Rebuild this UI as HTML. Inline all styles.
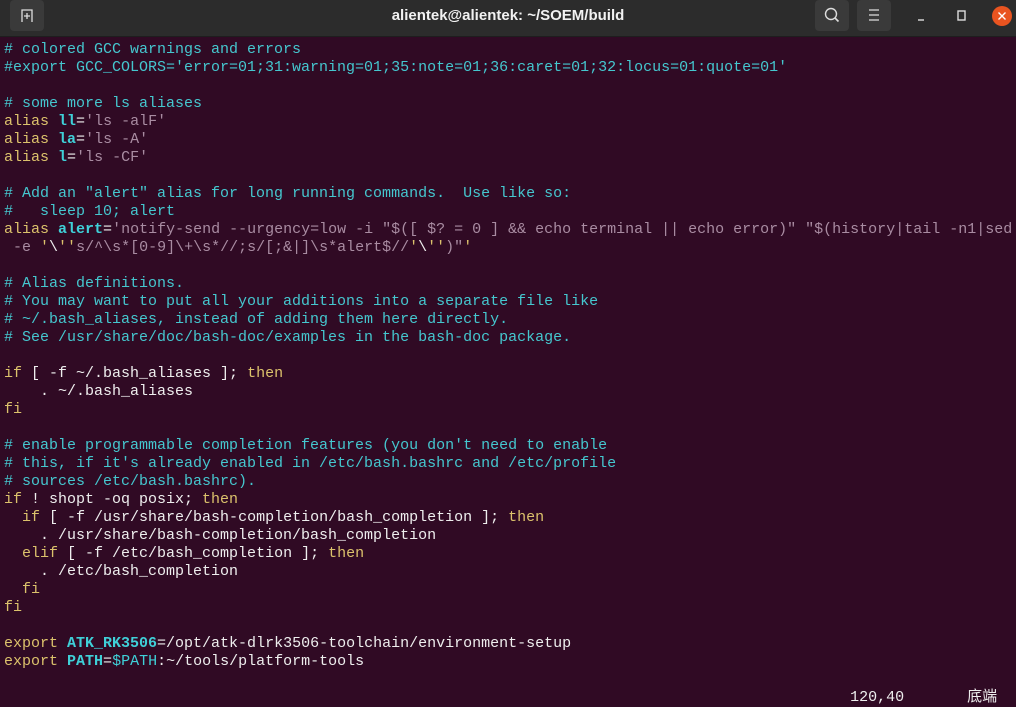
<!DOCTYPE html>
<html><head><meta charset="utf-8"><style>
*{margin:0;padding:0;box-sizing:border-box}
body{width:1016px;height:706px;overflow:hidden;background:#300a24;font-family:"Liberation Sans",sans-serif}
.tb{position:absolute;left:0;top:0;width:1016px;height:37px;background:#2c2c2c;border-bottom:1px solid #1e1e1e}
.title{position:absolute;left:0;right:0;top:0;line-height:32px;text-align:center;color:#f2f2f2;font-weight:bold;font-size:15px}
.btn{position:absolute;top:0;width:34px;height:31px;background:#3a3a3a;border-radius:4px}
.term{position:absolute;left:4px;top:41px;font-family:"Liberation Mono","Noto Sans CJK SC",monospace;font-size:15px;line-height:18px;color:#eeeeee;white-space:pre}
.c{color:#45c7cf}.y{color:#dcc26c}.s{color:#a98ca2}.b{color:#3fd0d8;font-weight:bold}.v{color:#3fd0d8}
</style></head><body>
<div class="tb">
<div class="btn" style="left:10px"><svg width="34" height="31" viewBox="0 0 34 31"><path d="M12 22V10h10v12M17 13v6M14 16h6" stroke="#ddd" stroke-width="1.3" fill="none"/></svg></div>
<div class="title">alientek@alientek: ~/SOEM/build</div>
<div class="btn" style="left:815px"><svg width="34" height="31" viewBox="0 0 34 31"><circle cx="16" cy="14" r="5.5" stroke="#ddd" stroke-width="1.4" fill="none"/><path d="M20 18l3.5 3.5" stroke="#ddd" stroke-width="1.6"/></svg></div>
<div class="btn" style="left:857px"><svg width="34" height="31" viewBox="0 0 34 31"><path d="M12 10h10M12 15h10M12 20h10" stroke="#ddd" stroke-width="1.3"/></svg></div>
<svg style="position:absolute;left:910px;top:5px" width="106" height="22" viewBox="0 0 106 22"><path d="M8 15h6" stroke="#ddd" stroke-width="1.4"/><rect x="48" y="6" width="7" height="9" stroke="#ddd" stroke-width="1.4" fill="none"/><circle cx="92" cy="11" r="10" fill="#e95420"/><path d="M88.5 7.5l7 7M95.5 7.5l-7 7" stroke="#fff" stroke-width="1.4"/></svg>
</div>
<div class="term"><span class="c"># colored GCC warnings and errors
#export GCC_COLORS='error=01;31:warning=01;35:note=01;36:caret=01;32:locus=01:quote=01'</span>

<span class="c"># some more ls aliases</span>
<span class="y">alias</span> <span class="b">ll</span>=<span class="s">'ls -alF'</span>
<span class="y">alias</span> <span class="b">la</span>=<span class="s">'ls -A'</span>
<span class="y">alias</span> <span class="b">l</span>=<span class="s">'ls -CF'</span>

<span class="c"># Add an "alert" alias for long running commands.  Use like so:
#   sleep 10; alert</span>
<span class="y">alias</span> <span class="b">alert</span>=<span class="s">'notify-send --urgency=low -i "$([ $? = 0 ] &amp;&amp; echo terminal || echo error)" "$(history|tail -n1|sed</span>
<span class="s"> -e </span><span class="y">'</span>\<span class="y">''</span><span class="s">s/^\s*[0-9]\+\s*//;s/[;&amp;|]\s*alert$//</span><span class="y">'</span>\<span class="y">''</span><span class="s">)"</span><span class="y">'</span>

<span class="c"># Alias definitions.
# You may want to put all your additions into a separate file like
# ~/.bash_aliases, instead of adding them here directly.
# See /usr/share/doc/bash-doc/examples in the bash-doc package.</span>

<span class="y">if</span> [ -f ~/.bash_aliases ]; <span class="y">then</span>
    . ~/.bash_aliases
<span class="y">fi</span>

<span class="c"># enable programmable completion features (you don't need to enable
# this, if it's already enabled in /etc/bash.bashrc and /etc/profile
# sources /etc/bash.bashrc).</span>
<span class="y">if</span> ! shopt -oq posix; <span class="y">then</span>
  <span class="y">if</span> [ -f /usr/share/bash-completion/bash_completion ]; <span class="y">then</span>
    . /usr/share/bash-completion/bash_completion
  <span class="y">elif</span> [ -f /etc/bash_completion ]; <span class="y">then</span>
    . /etc/bash_completion
  <span class="y">fi</span>
<span class="y">fi</span>

<span class="y">export</span> <span class="b">ATK_RK3506</span>=/opt/atk-dlrk3506-toolchain/environment-setup
<span class="y">export</span> <span class="b">PATH</span>=<span class="v">$PATH</span>:~/tools/platform-tools

                                                                                              120,40       底端</div>
</body></html>
